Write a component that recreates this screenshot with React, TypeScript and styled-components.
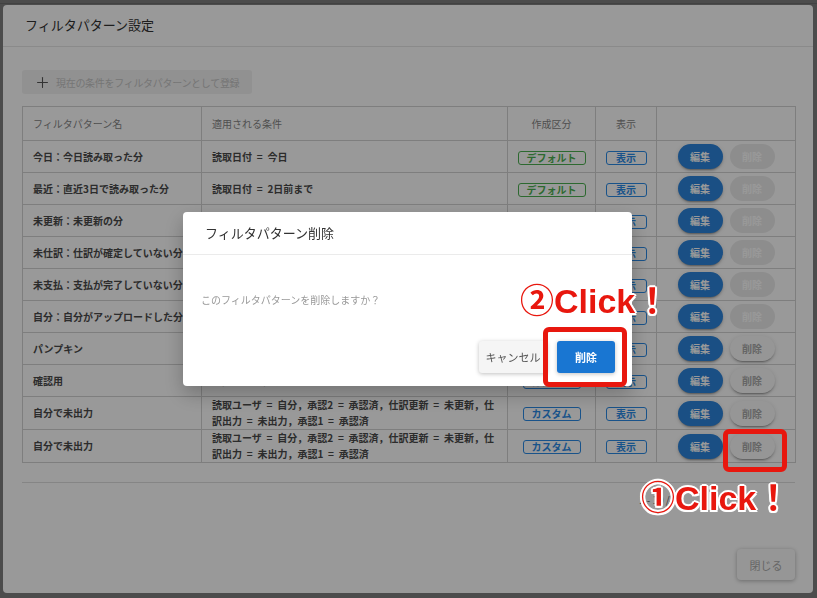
import styled, { createGlobalStyle } from 'styled-components';
import { Plus } from 'lucide-react';

type Kind = 'default' | 'custom';

interface FilterPattern {
  name: string;
  condition: string;
  kind: Kind;
  deletable: boolean;
}

const LONG_CONDITION =
  '読取ユーザ = 自分，承認2 = 承認済，仕訳更新 = 未更新，仕訳出力 = 未出力，承認1 = 承認済';

const patterns: FilterPattern[] = [
  { name: '今日：今日読み取った分', condition: '読取日付 = 今日', kind: 'default', deletable: false },
  { name: '最近：直近3日で読み取った分', condition: '読取日付 = 2日前まで', kind: 'default', deletable: false },
  { name: '未更新：未更新の分', condition: '仕訳更新 = 未更新', kind: 'default', deletable: false },
  { name: '未仕訳：仕訳が確定していない分', condition: '仕訳確定 = 未確定', kind: 'default', deletable: false },
  { name: '未支払：支払が完了していない分', condition: '支払状況 = 未完了', kind: 'default', deletable: false },
  { name: '自分：自分がアップロードした分', condition: '読取ユーザ = 自分', kind: 'default', deletable: false },
  { name: 'パンプキン', condition: '取引先 = パンプキン', kind: 'custom', deletable: true },
  { name: '確認用', condition: '承認1 = 承認済', kind: 'custom', deletable: true },
  { name: '自分で未出力', condition: LONG_CONDITION, kind: 'custom', deletable: true },
  { name: '自分で未出力', condition: LONG_CONDITION, kind: 'custom', deletable: true },
];

const GlobalStyle = createGlobalStyle`
  html, body {
    margin: 0;
    padding: 0;
  }
  body {
    background: #7f7f7f;
    font-family: "Noto Sans CJK JP", "Noto Sans", sans-serif;
    overflow: hidden;
  }
`;

const Page = styled.div`
  position: relative;
  width: 817px;
  height: 598px;
  padding: 5px 4px 5px 3px;
  box-sizing: border-box;
  background: linear-gradient(#6e6e6e, #6e6e6e) 0 3px / 100% 1px no-repeat, #7f7f7f;
`;

const Backdrop = styled.div`
  position: fixed;
  inset: 0;
  background: rgba(0, 0, 0, 0.4);
`;

/* ---------- settings dialog ---------- */

const SettingsDialog = styled.div`
  width: 810px;
  height: 588px;
  background: #fff;
  border-radius: 4px;
  display: flex;
  flex-direction: column;
  overflow: hidden;
`;

const DialogTitle = styled.div`
  height: 42px;
  box-sizing: border-box;
  padding: 0 22px 2px;
  display: flex;
  align-items: center;
  border-bottom: 1px solid #e6e6e6;
  font-size: 13px;
  color: #333;
`;

const DialogBody = styled.div`
  flex: 1;
  padding: 23px 18px 13px 19px;
  display: flex;
  flex-direction: column;
`;

const AddButton = styled.button`
  align-self: flex-start;
  width: 230px;
  height: 24px;
  padding: 0 12px;
  display: flex;
  align-items: center;
  gap: 5px;
  border: none;
  border-radius: 3px;
  background: #f2f2f2;
  color: #c4c4c4;
  font-family: inherit;
  font-size: 10px;
  letter-spacing: -0.3px;
  white-space: nowrap;
  svg {
    flex-shrink: 0;
    color: #555;
  }
`;

const Table = styled.table`
  margin-top: 12px;
  width: 773px;
  table-layout: fixed;
  border-collapse: collapse;
`;

const HeadCell = styled.th<{ $width: number; $center?: boolean }>`
  width: ${(p) => p.$width}px;
  box-sizing: border-box;
  height: 34px;
  padding: 0 10px;
  border: 1px solid #d2d2d2;
  text-align: ${(p) => (p.$center ? 'center' : 'left')};
  font-size: 10px;
  font-weight: normal;
  color: #858585;
`;

const Row = styled.tr`
  height: 32px;
`;

const Cell = styled.td<{ $center?: boolean }>`
  padding: ${(p) => (p.$center ? '0' : '0 6px 0 10px')};
  border: 1px solid #d2d2d2;
  font-size: 10px;
  font-weight: bold;
  line-height: 16px;
  word-spacing: 2.5px;
  color: #4a4a4a;
  text-align: ${(p) => (p.$center ? 'center' : 'left')};
  vertical-align: middle;
`;

const Badge = styled.span<{ $tone: 'green' | 'blue'; $width: number }>`
  display: inline-block;
  width: ${(p) => p.$width}px;
  height: 14px;
  box-sizing: border-box;
  border: 1px solid ${(p) => (p.$tone === 'green' ? '#4caf50' : '#2a8ae6')};
  border-radius: 3px;
  color: ${(p) => (p.$tone === 'green' ? '#4caf50' : '#2a8ae6')};
  font-size: 10px;
  font-weight: bold;
  line-height: 12px;
  text-align: center;
  vertical-align: middle;
  word-spacing: normal;
`;

const Actions = styled.div`
  display: flex;
  justify-content: center;
  gap: 7px;
`;

const PillButton = styled.button<{ $variant: 'edit' | 'delete' }>`
  width: 45px;
  height: 25px;
  border: none;
  border-radius: 13px;
  font-family: inherit;
  font-size: 10px;
  font-weight: bold;
  background: ${(p) => (p.$variant === 'edit' ? '#2c84dc' : '#fafafa')};
  color: ${(p) => (p.$variant === 'edit' ? '#fff' : '#a8a8a8')};
  box-shadow: 0 3px 1px -2px rgba(0, 0, 0, 0.2), 0 2px 2px rgba(0, 0, 0, 0.14),
    0 1px 5px rgba(0, 0, 0, 0.12);
  &:disabled {
    background: #ececec;
    color: #fff;
    box-shadow: none;
  }
`;

const Divider = styled.div`
  margin-top: 19px;
  height: 1px;
  background: #dedede;
`;

const Pagination = styled.div`
  height: 32px;
  display: flex;
  align-items: center;
  justify-content: flex-end;
  padding-right: 112px;
  font-size: 10px;
  color: #606060;
`;

const Footer = styled.div`
  margin-top: auto;
  display: flex;
  justify-content: flex-end;
`;

const CloseButton = styled.button`
  width: 58px;
  height: 31px;
  border: none;
  border-radius: 4px;
  background: #fafafa;
  color: #aaa;
  font-family: inherit;
  font-size: 11px;
  box-shadow: 0 1px 4px rgba(0, 0, 0, 0.3);
`;

/* ---------- confirm dialog ---------- */

const ConfirmDialog = styled.div`
  position: fixed;
  left: 183px;
  top: 212px;
  width: 449px;
  height: 174px;
  background: #fff;
  border-radius: 4px;
  box-shadow: 0 8px 20px rgba(0, 0, 0, 0.25);
  display: flex;
  flex-direction: column;
`;

const ConfirmTitle = styled(DialogTitle)`
  height: 43px;
  border-bottom-color: #ebebeb;
`;

const ConfirmText = styled.p`
  margin: 39px 0 0;
  padding: 0 18px;
  font-size: 10px;
  line-height: 12px;
  color: #999;
`;

const ConfirmActions = styled.div`
  margin-top: auto;
  padding: 0 17px 13px;
  display: flex;
  justify-content: flex-end;
  gap: 10px;
`;

const FlatButton = styled.button<{ $primary?: boolean }>`
  width: ${(p) => (p.$primary ? 58 : 68)}px;
  height: 32px;
  border: none;
  border-radius: 3px;
  font-family: inherit;
  font-size: 11px;
  font-weight: ${(p) => (p.$primary ? 'bold' : 'normal')};
  background: ${(p) => (p.$primary ? '#1976d2' : '#f5f5f5')};
  color: ${(p) => (p.$primary ? '#fff' : '#555')};
  box-shadow: 0 1px 4px rgba(0, 0, 0, 0.25);
`;

/* ---------- red call-outs ---------- */

const Frame = styled.div<{ $x: number; $y: number; $w: number; $h: number }>`
  position: absolute;
  left: ${(p) => p.$x}px;
  top: ${(p) => p.$y}px;
  width: ${(p) => p.$w}px;
  height: ${(p) => p.$h}px;
  box-sizing: border-box;
  border: 5px solid #e8170e;
  border-radius: 6px;
`;

const Callout = styled.div<{ $x: number; $y: number }>`
  position: absolute;
  left: ${(p) => p.$x}px;
  top: ${(p) => p.$y}px;
  font-family: "Liberation Sans", "Noto Sans CJK JP", sans-serif;
  font-size: 34px;
  font-weight: bold;
  line-height: 34px;
  color: #e8170e;
  white-space: nowrap;
  text-shadow: 2px 0 0 #fff, -2px 0 0 #fff, 0 2px 0 #fff, 0 -2px 0 #fff,
    1.5px 1.5px 0 #fff, -1.5px 1.5px 0 #fff, 1.5px -1.5px 0 #fff,
    -1.5px -1.5px 0 #fff, 0 0 3px #fff;
`;

const App = () => {
  return (
    <Page>
      <GlobalStyle />
      <SettingsDialog>
        <DialogTitle>フィルタパターン設定</DialogTitle>
        <DialogBody>
          <AddButton>
            <Plus size={17} strokeWidth={1.5} />
            現在の条件をフィルタパターンとして登録
          </AddButton>

          <Table>
            <thead>
              <tr>
                <HeadCell $width={179}>フィルタパターン名</HeadCell>
                <HeadCell $width={306}>適用される条件</HeadCell>
                <HeadCell $width={88} $center>
                  作成区分
                </HeadCell>
                <HeadCell $width={61} $center>
                  表示
                </HeadCell>
                <HeadCell $width={139} />
              </tr>
            </thead>
            <tbody>
              {patterns.map((p, i) => (
                <Row key={i}>
                  <Cell>{p.name}</Cell>
                  <Cell>{p.condition}</Cell>
                  <Cell $center>
                    {p.kind === 'default' ? (
                      <Badge $tone="green" $width={68}>
                        デフォルト
                      </Badge>
                    ) : (
                      <Badge $tone="blue" $width={58}>
                        カスタム
                      </Badge>
                    )}
                  </Cell>
                  <Cell $center>
                    <Badge $tone="blue" $width={41}>
                      表示
                    </Badge>
                  </Cell>
                  <Cell $center>
                    <Actions>
                      <PillButton $variant="edit">編集</PillButton>
                      <PillButton $variant="delete" disabled={!p.deletable}>
                        削除
                      </PillButton>
                    </Actions>
                  </Cell>
                </Row>
              ))}
            </tbody>
          </Table>

          <Divider />
          <Pagination>1 - 10 / 10</Pagination>

          <Footer>
            <CloseButton>閉じる</CloseButton>
          </Footer>
        </DialogBody>
      </SettingsDialog>

      <Backdrop />

      <ConfirmDialog>
        <ConfirmTitle>フィルタパターン削除</ConfirmTitle>
        <ConfirmText>このフィルタパターンを削除しますか？</ConfirmText>
        <ConfirmActions>
          <FlatButton>キャンセル</FlatButton>
          <FlatButton $primary>削除</FlatButton>
        </ConfirmActions>
      </ConfirmDialog>

      <Frame $x={543} $y={327} $w={84} $h={60} />
      <Callout $x={520} $y={284}>②Click！</Callout>

      <Frame $x={723} $y={429} $w={64} $h={43} />
      <Callout $x={641} $y={481}>①Click！</Callout>
    </Page>
  );
};

export default App;
